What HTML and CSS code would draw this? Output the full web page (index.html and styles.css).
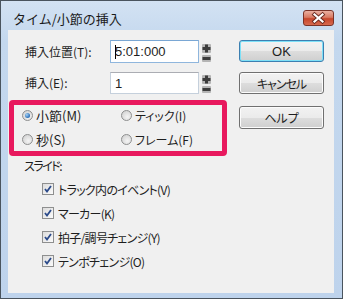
FILE: index.html
```html
<!DOCTYPE html>
<html lang="ja">
<head>
<meta charset="utf-8">
<link rel="stylesheet" href="styles.css">
</head>
<body>
<div class="window">
  <div class="titlebar">
    <span class="title">タイム/小節の挿入</span>
    <span class="close">
      <svg width="31" height="16" viewBox="0 0 31 16">
        <path d="M11.5 4.5 L19.5 11.5 M19.5 4.5 L11.5 11.5" stroke="#6a2a20" stroke-width="4" stroke-linecap="square"/>
        <path d="M11.5 4.5 L19.5 11.5 M19.5 4.5 L11.5 11.5" stroke="#ffffff" stroke-width="2.2" stroke-linecap="square"/>
      </svg>
    </span>
  </div>
  <div class="content">
    <div class="left">
      <div class="field">
        <span class="flabel">挿入位置(T):</span>
        <div class="input focus"><span class="caret"></span>5:01:000</div>
        <div class="spin">
          <svg width="9" height="22" viewBox="0 0 9 22">
            <rect x="0" y="3" width="9" height="9" rx="1" fill="#b4b4b4"/>
            <rect x="0.5" y="6" width="8" height="3" fill="#3c3c3c"/>
            <rect x="3" y="3.5" width="3" height="8" fill="#3c3c3c"/>
            <rect x="0" y="14" width="9" height="7" rx="1" fill="#b4b4b4"/>
            <rect x="0.5" y="16" width="8" height="3" fill="#3c3c3c"/>
          </svg>
        </div>
      </div>
      <div class="field f2">
        <span class="flabel">挿入(E):</span>
        <div class="input">1</div>
        <div class="spin">
          <svg width="9" height="22" viewBox="0 0 9 22">
            <rect x="0" y="3" width="9" height="9" rx="1" fill="#b4b4b4"/>
            <rect x="0.5" y="6" width="8" height="3" fill="#3c3c3c"/>
            <rect x="3" y="3.5" width="3" height="8" fill="#3c3c3c"/>
            <rect x="0" y="14" width="9" height="7" rx="1" fill="#b4b4b4"/>
            <rect x="0.5" y="16" width="8" height="3" fill="#3c3c3c"/>
          </svg>
        </div>
      </div>
      <div class="highlight">
        <div class="radios">
          <div class="radio"><span class="circle on"></span>小節(M)</div>
          <div class="radio kana"><span class="circle"></span>ティック(I)</div>
          <div class="radio"><span class="circle"></span>秒(S)</div>
          <div class="radio kana"><span class="circle"></span>フレーム(F)</div>
        </div>
      </div>
      <div class="slide-label">スライド:</div>
      <div class="checks">
        <div class="check"><span class="box"><svg width="8" height="8" viewBox="0 0 8 8"><path d="M1 4 L3 6.5 L7 1" fill="none" stroke="#2b4a8a" stroke-width="1.8"/></svg></span>トラック内のイベント(V)</div>
        <div class="check"><span class="box"><svg width="8" height="8" viewBox="0 0 8 8"><path d="M1 4 L3 6.5 L7 1" fill="none" stroke="#2b4a8a" stroke-width="1.8"/></svg></span>マーカー(K)</div>
        <div class="check"><span class="box"><svg width="8" height="8" viewBox="0 0 8 8"><path d="M1 4 L3 6.5 L7 1" fill="none" stroke="#2b4a8a" stroke-width="1.8"/></svg></span>拍子/調号チェンジ(Y)</div>
        <div class="check"><span class="box"><svg width="8" height="8" viewBox="0 0 8 8"><path d="M1 4 L3 6.5 L7 1" fill="none" stroke="#2b4a8a" stroke-width="1.8"/></svg></span>テンポチェンジ(O)</div>
      </div>
    </div>
    <div class="buttons">
      <div class="btn default">OK</div>
      <div class="btn cancel">キャンセル</div>
      <div class="btn help">ヘルプ</div>
    </div>
  </div>
</div>
</body>
</html>
```
FILE: styles.css
```css
* { box-sizing: border-box; }
html, body { margin: 0; padding: 0; background: #fff; }
body {
  font-family: "Noto Sans CJK JP", "Liberation Sans", sans-serif;
  font-size: 12px;
  color: #1e1e1e;
  font-feature-settings: "palt";
}
.window {
  width: 343px;
  height: 299px;
  border: 1px solid #4a545e;
  background: linear-gradient(#d3e2f3, #c4d8ee 40px, #bed3ec);
  display: flex;
  flex-direction: column;
}
.titlebar {
  height: 29px;
  display: flex;
  align-items: flex-start;
  justify-content: space-between;
  padding-left: 12px;
  padding-right: 8px;
}
.title {
  font-size: 13px;
  line-height: 15px;
  margin-top: 10px;
  color: #1a1a1a;
  font-feature-settings: normal;
}
.close {
  margin-top: 9px;
  width: 31px;
  height: 16px;
  border: 1px solid #7a3328;
  border-radius: 3px;
  background: linear-gradient(#eab0a2, #d87a63 45%, #c6462c 55%, #d76a4f);
  display: flex;
}
.close svg { display: block; margin: -1px; }
.content {
  flex: 1;
  margin: 0 8px 5px 7px;
  background: #f0f0f0;
  display: flex;
  padding: 10px 0 0 1px;
  gap: 12px;
}
.left { width: 218px; display: flex; flex-direction: column; }
.field {
  display: flex;
  align-items: center;
  height: 23px;
  padding-left: 16px;
}
.f2 { margin-top: 9px; height: 22px; }
.flabel { width: 85px; line-height: 16px; }
.input {
  width: 89px;
  height: 100%;
  background: #fff;
  border: 1px solid #c5d0dc;
  border-top-color: #abadb3;
  padding-left: 4px;
  display: flex;
  align-items: center;
  font-family: "Liberation Sans", sans-serif;
  font-size: 13px;
}
.input.focus { border-color: #8fb6dd; border-top-color: #7aa7d4; }
.caret {
  width: 1px;
  height: 14px;
  background: #000;
  margin-right: -1px;
}
.spin { margin-left: 3px; height: 22px; }
.spin svg { display: block; }
.highlight {
  margin-top: 6px;
  height: 56px;
  border: 5px solid #e8195e;
  border-radius: 4px;
  padding: 0 0 0 8px;
}
.radios {
  display: grid;
  grid-template-columns: 99px 1fr;
  grid-auto-rows: 20px;
  row-gap: 4px;
}
.radio {
  display: flex;
  align-items: center;
  gap: 3px;
  font-size: 13px;
}
.radio.kana { font-size: 12px; }
.circle {
  width: 11px;
  height: 11px;
  border-radius: 50%;
  border: 1px solid #8e8f8f;
  background: radial-gradient(circle at 60% 65%, #f4f4f4, #d8d8d8 70%, #c8c8c8);
  display: flex;
  align-items: center;
  justify-content: center;
}
.circle.on::after {
  content: "";
  width: 5px;
  height: 5px;
  border-radius: 50%;
  background: radial-gradient(circle at 35% 35%, #a7d2f4, #2a6fb8 70%, #1d4f8f);
}
.slide-label {
  height: 20px;
  line-height: 20px;
  padding-left: 15px;
  letter-spacing: -1.5px;
}
.checks { margin-top: 1px; padding-left: 33px; }
.check {
  height: 24px;
  display: flex;
  align-items: center;
  gap: 3px;
  font-size: 12px;
  letter-spacing: -0.7px;
}
.box {
  width: 12px;
  height: 12px;
  border: 1px solid #8e8f8f;
  background: linear-gradient(135deg, #dcdcdc, #fbfbfb);
  display: flex;
  align-items: center;
  justify-content: center;
  margin-right: 1px;
}
.box svg { display: block; }
.buttons { width: 85px; display: flex; flex-direction: column; }
.btn {
  height: 22px;
  border: 1px solid #707070;
  border-radius: 3px;
  background: linear-gradient(#f2f2f2, #ebebeb 50%, #dddddd 51%, #cfcfcf);
  display: flex;
  align-items: center;
  justify-content: center;
  font-size: 12px;
  box-shadow: inset 0 0 0 1px #fcfcfc;
}
.btn.default {
  border-color: #3c7fb1;
  box-shadow: inset 0 0 0 1px #7de0f7;
  font-family: "Liberation Sans", sans-serif;
  font-size: 13px;
}
.btn.cancel { margin-top: 10px; letter-spacing: -1px; }
.btn.help { margin-top: 12px; height: 23px; }
```
